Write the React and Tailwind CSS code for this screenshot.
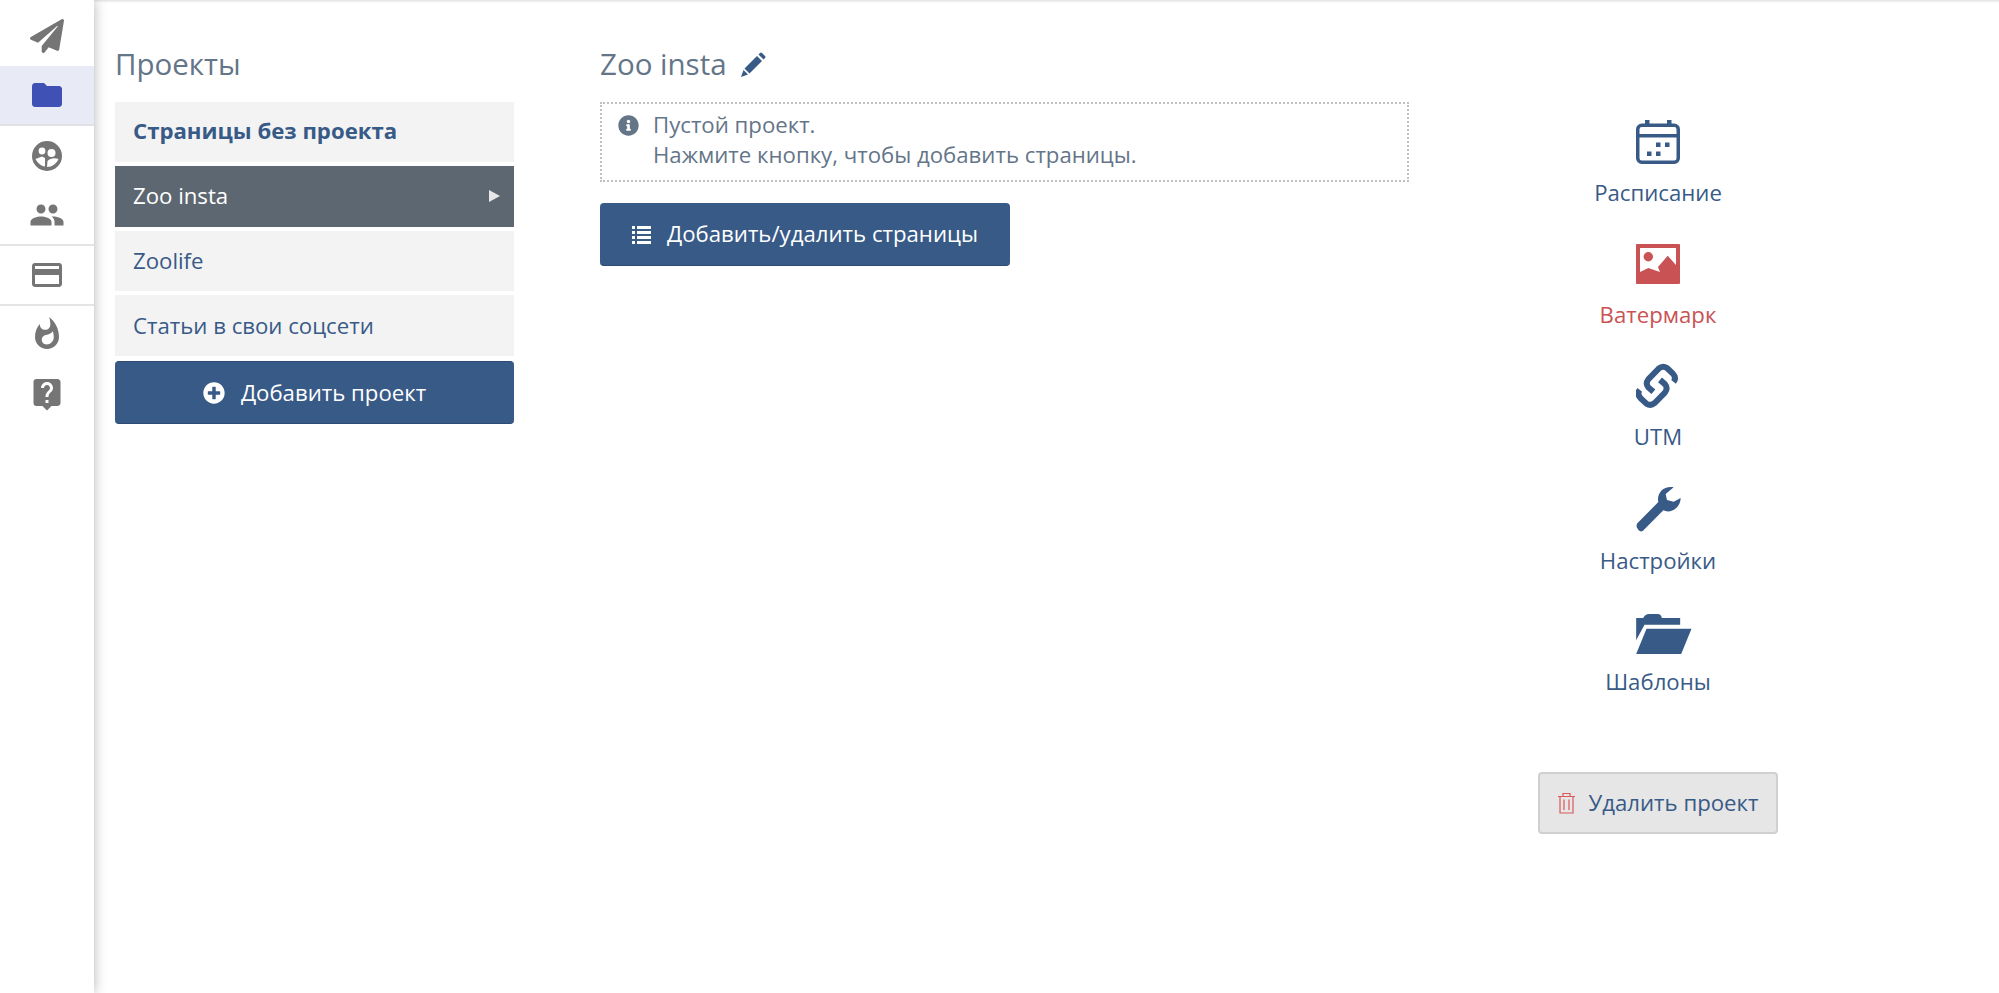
import { FaPaperPlane, FaInfoCircle, FaPlusCircle } from 'react-icons/fa';
import { MdFolder, MdPeople, MdCreditCard, MdLiveHelp, MdWhatshot } from 'react-icons/md';

const font = { fontFamily: '"Open Sans", sans-serif' };

// circle with people cut out, no matching icon in the packages
function GroupCircle() {
  return (
    <svg width="30" height="30" viewBox="0 0 30 30">
      <circle cx="15" cy="15" r="15" fill="#757575" />
      <circle cx="10" cy="10" r="3.4" fill="#fff" />
      <circle cx="19.5" cy="12" r="4" fill="#fff" />
      <path d="M3.5 18 L10 15.5 L13 17 L13 25.5 C9 25 5.5 22 3.5 18Z" fill="#fff" />
      <path d="M15 26 L15.5 20 C18 17 23 16.5 26.5 18 C24.5 22.5 20 26 15 26Z" fill="#fff" />
    </svg>
  );
}

function CalendarIcon() {
  return (
    <svg width="44" height="44" viewBox="0 0 44 44" fill="currentColor" className="mt-[1px]">
      <rect x="1.75" y="5.25" width="40.5" height="37" rx="4" fill="none" stroke="currentColor" strokeWidth="3.5" />
      <rect x="2" y="14" width="40" height="3.5" />
      <rect x="9" y="0" width="4.5" height="6" />
      <rect x="31" y="0" width="4.5" height="6" />
      <rect x="20" y="22.5" width="4.5" height="4.5" />
      <rect x="29" y="22.5" width="4.5" height="4.5" />
      <rect x="11" y="31.5" width="4.5" height="4.5" />
      <rect x="20" y="31.5" width="4.5" height="4.5" />
    </svg>
  );
}

function ImageIcon() {
  return (
    <svg width="44" height="40" viewBox="0 0 44 40" fill="currentColor">
      <path
        fillRule="evenodd"
        d="M1 0H43Q44 0 44 1V39Q44 40 43 40H1Q0 40 0 39V1Q0 0 1 0Z M4 4V28L12.3 24L24 28L22 23L31.7 11.7L40 21V4Z"
      />
      <circle cx="12.3" cy="12.7" r="4.7" />
    </svg>
  );
}

function LinkIcon() {
  return (
    <svg width="45" height="48" viewBox="35 20 135 145" fill="none" stroke="currentColor" strokeWidth="18">
      <path d="M148 80 Q158 68 145 54 L128 38 Q115 30 103 40 L72 72 Q62 85 72 97 L87 110" />
      <path d="M46 104 Q36 116 49 130 L66 146 Q79 154 91 144 L122 112 Q132 99 122 87 L107 74" />
    </svg>
  );
}

function WrenchIcon() {
  return (
    <svg width="45" height="46" viewBox="33 18 135 138" fill="currentColor" className="mt-[2px]">
      <path d="M37 130 L100 66 C94 40 116 16 146 22 L122 42 L126 60 L146 65 L167 54 C166 85 136 102 115 91 L54 152 Q47 157 41 151 L36 143 Q33 136 37 130Z" />
    </svg>
  );
}

function FolderIcon() {
  return (
    <svg width="56" height="41" viewBox="33 40 167 123" fill="currentColor" className="ml-[12px] mt-[8px]">
      <path d="M33 55 L54 55 Q60 43 72 43 L98 43 Q108 43 110 55 L165 55 L165 75 L58 75 L33 122Z" />
      <path d="M64 87 L199 87 L168 163 L33 163Z" />
    </svg>
  );
}

function TrashIcon() {
  return (
    <svg width="17" height="22" viewBox="0 0 17 22" fill="none" stroke="#d9595b" strokeWidth="1.2">
      <path d="M0 4.5H17 M5 4.5V1.5H12V4.5 M2 4.5V21H15V4.5 M6 7.5V18 M11 7.5V18" />
    </svg>
  );
}

function ListIcon() {
  return (
    <svg width="19" height="19" viewBox="0 0 19 19" fill="currentColor">
      <path d="M0 1h3v3H0z M5 1h14v3H5z M0 6h3v3H0z M5 6h14v3H5z M0 11h3v3H0z M5 11h14v3H5z M0 16h3v3H0z M5 16h14v3H5z" />
    </svg>
  );
}

function PencilIcon() {
  return (
    <svg width="25" height="25" viewBox="0 0 25 25" fill="#385a87">
      <path d="M3.5 16.5 L16 4 L21 9 L8.5 21.5Z" />
      <path d="M17.5 2.5 L19 1 Q20 0 21 1 L24 4 Q25 5 24 6 L22.5 7.5Z" />
      <path d="M2.5 18 L7 22.5 L0 25Z" />
    </svg>
  );
}

function NavRow({ active, border, children }) {
  return (
    <div className={`h-[60px] flex items-center justify-center ${active ? 'bg-[#e8eaf6] border-b-2 border-[#e2e2e6]' : ''} ${border ? 'border-b-2 border-[#e4e4e4]' : ''}`}>
      {children}
    </div>
  );
}

function ProjectRow({ children, className = 'h-[60px] bg-[#f3f3f3] text-[#385a87]' }) {
  return <div className={`flex items-center pl-[18px] text-[22.2px] ${className}`}>{children}</div>;
}

function Tool({ icon, label, red, labelClass = 'mt-[15px]' }) {
  return (
    <div className={`h-[122px] flex flex-col items-center ${red ? 'text-[#c95254]' : 'text-[#385a87]'}`}>
      <div className="h-[47px] flex items-center justify-center">{icon}</div>
      <div className={`text-[22.2px] leading-[26px] ${labelClass}`}>{label}</div>
    </div>
  );
}

export default function App() {
  return (
    <div className="flex h-[993px] w-[1999px] bg-white overflow-hidden relative" style={font}>
      <div className="absolute top-0 left-0 right-0 h-[3px] bg-gradient-to-b from-[#e2e2e2] to-white" />
      <aside className="w-[94px] shrink-0 pt-[6px] bg-white shadow-[0_0_12px_rgba(0,0,0,0.3)] z-10">
        <NavRow><FaPaperPlane size={34} color="#757575" /></NavRow>
        <NavRow active><MdFolder size={36} color="#3f51b5" /></NavRow>
        <NavRow><GroupCircle /></NavRow>
        <NavRow border><MdPeople size={36} color="#757575" /></NavRow>
        <NavRow border><MdCreditCard size={36} color="#757575" /></NavRow>
        <NavRow><MdWhatshot size={36} color="#757575" className="mb-[5px]" /></NavRow>
        <NavRow><MdLiveHelp size={36} color="#757575" className="mb-[5px]" /></NavRow>
      </aside>

      <section className="ml-[21px] w-[399px] shrink-0">
        <h2 className="mt-[46px] h-[56px] text-[29.5px] leading-[36px] text-[#647588]">Проекты</h2>
        <div className="flex flex-col gap-1">
          <ProjectRow className="h-[60px] bg-[#f3f3f3] text-[#385a87] font-bold pb-[3px]">Страницы без проекта</ProjectRow>
          <ProjectRow className="h-[61px] bg-[#5d6771] text-white justify-between pr-[14px] pb-[1px]">
            <span>Zoo insta</span>
            <span className="w-0 h-0 border-y-[6px] border-y-transparent border-l-[11px] border-l-[#e8e8e8]" />
          </ProjectRow>
          <ProjectRow>Zoolife</ProjectRow>
          <ProjectRow className="h-[61px] bg-[#f3f3f3] text-[#385a87]">Статьи в свои соцсети</ProjectRow>
        </div>
        <button className="mt-[5px] w-full h-[63px] flex items-center justify-center gap-[16px] rounded bg-[#385a87] border-t border-b border-[#2c4a72] text-white text-[22.2px]">
          <FaPlusCircle size={22} />
          <span>Добавить проект</span>
        </button>
      </section>

      <main className="ml-[86px] w-[809px] shrink-0">
        <h2 className="mt-[46px] h-[56px] flex gap-[14px] text-[29.5px] leading-[36px] text-[#647588]">
          <span>Zoo insta</span>
          <span className="mt-[6px]"><PencilIcon /></span>
        </h2>
        <div className="h-[80px] border-2 border-dotted border-[#c0c0c0] pl-[16px] flex gap-[14px] pt-[6px] text-[22.2px] leading-[30px] text-[#647588]">
          <FaInfoCircle size={21} className="mt-[5px] shrink-0" />
          <div>
            <div>Пустой проект.</div>
            <div>Нажмите кнопку, чтобы добавить страницы.</div>
          </div>
        </div>
        <button className="mt-[21px] w-[410px] h-[63px] flex items-center justify-center gap-[16px] rounded bg-[#385a87] border-b border-[#2c4a72] text-white text-[22.2px]">
          <ListIcon />
          <span>Добавить/удалить страницы</span>
        </button>
      </main>

      <section className="ml-[129px] w-[240px] shrink-0 pt-[118px]">
        <Tool icon={<CalendarIcon />} label="Расписание" />
        <Tool red icon={<ImageIcon />} label="Ватермарк" />
        <Tool icon={<LinkIcon />} label="UTM" />
        <Tool icon={<WrenchIcon />} label="Настройки" labelClass="mt-[17px]" />
        <Tool icon={<FolderIcon />} label="Шаблоны" labelClass="mt-[16px]" />
        <button className="mt-[44px] w-full h-[62px] flex items-center justify-center gap-[14px] rounded bg-[#e6e6e6] border-2 border-[#d0d0d0] text-[#385a87] text-[22.2px]">
          <TrashIcon />
          <span>Удалить проект</span>
        </button>
      </section>
    </div>
  );
}
